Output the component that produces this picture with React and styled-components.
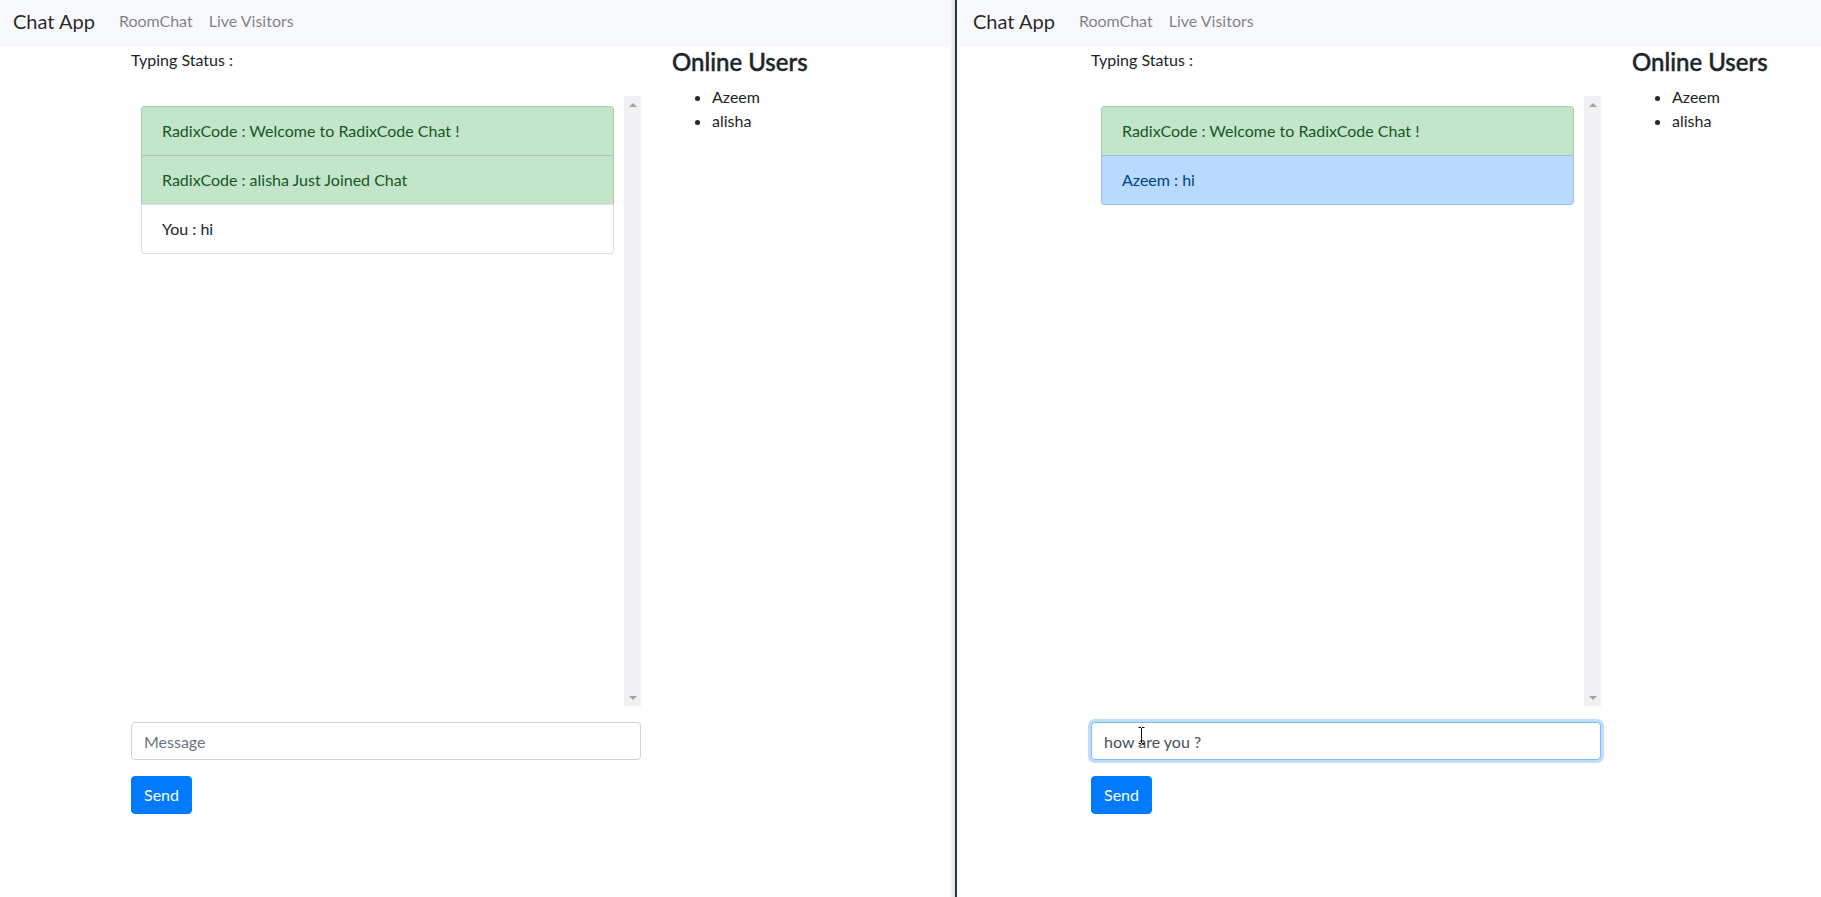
import React from "react";
import styled, { createGlobalStyle } from "styled-components";

const GlobalStyle = createGlobalStyle`
  html, body {
    margin: 0;
    padding: 0;
    height: 100%;
  }
  body {
    font-family: Lato, "Liberation Sans", sans-serif;
    color: #212529;
    background: #fff;
    overflow: hidden;
  }
  #root {
    height: 100%;
  }
  * {
    box-sizing: border-box;
  }
`;

const Desktop = styled.div`
  display: flex;
  width: 1821px;
  height: 897px;
  overflow: hidden;
`;

const Window = styled.div`
  flex: none;
  width: ${(p) => p.$width}px;
  height: 100%;
  overflow: hidden;
  padding-left: ${(p) => p.$inset || 0}px;
  background: #fff;
`;

/* 창 사이 경계선 + 그림자 */
const Divider = styled.div`
  flex: none;
  width: 7px;
  height: 100%;
  background: linear-gradient(
    to right,
    rgba(0, 0, 0, 0.02),
    rgba(0, 0, 0, 0.13) 5px,
    #1c3a4e 5px,
    #1c3a4e 7px
  );
`;

const Page = styled.div`
  width: 950px;
  height: 100%;
  display: flex;
  flex-direction: column;
`;

const Navbar = styled.nav`
  flex: none;
  height: 47px;
  display: flex;
  align-items: center;
  padding: 0 0 5px 13px;
  background: #f8f9fc;
`;

const Brand = styled.a`
  font-size: 20px;
  line-height: 30px;
  color: rgba(0, 0, 0, 0.85);
  margin-right: 16px;
  text-decoration: none;
`;

const NavLink = styled.a`
  font-size: 16px;
  line-height: 24px;
  padding: 0 8px;
  color: rgba(0, 0, 0, 0.5);
  text-decoration: none;
`;

const Main = styled.main`
  display: flex;
  gap: 31px;
  padding: 1px 0 0 131px;
`;

const ChatColumn = styled.section`
  width: 510px;
  display: flex;
  flex-direction: column;
`;

const TypingStatus = styled.div`
  font-size: 16px;
  line-height: 24px;
`;

const ChatBox = styled.div`
  display: flex;
  height: 610px;
  margin-top: 24px;
`;

const Messages = styled.div`
  flex: 1;
  padding: 10px;
`;

const ListGroup = styled.ul`
  margin: 0;
  padding: 0;
  list-style: none;
  display: flex;
  flex-direction: column;
`;

const itemColors = {
  success: { bg: "#c3e6cb", fg: "#155724" },
  primary: { bg: "#b8daff", fg: "#004085" },
  plain: { bg: "#fff", fg: "#212529" },
};

const ListItem = styled.li`
  padding: 12px 20px;
  font-size: 16px;
  line-height: 24px;
  border: 1px solid rgba(0, 0, 0, 0.125);
  margin-bottom: -1px;
  background: ${(p) => itemColors[p.$variant].bg};
  color: ${(p) => itemColors[p.$variant].fg};

  &:first-child {
    border-radius: 4px 4px 0 0;
  }
  &:last-child {
    margin-bottom: 0;
    border-radius: 0 0 4px 4px;
  }
`;

const ScrollTrack = styled.div`
  flex: none;
  width: 17px;
  display: flex;
  flex-direction: column;
  justify-content: space-between;
  background: #f0eff2;
`;

const ScrollArrow = styled.div`
  height: 17px;
  display: flex;
  align-items: center;
  justify-content: center;

  &::before {
    content: "";
    border-left: 4px solid transparent;
    border-right: 4px solid transparent;
    ${(p) =>
      p.$dir === "up"
        ? "border-bottom: 4px solid #a3a3a3;"
        : "border-top: 4px solid #a3a3a3;"}
  }
`;

const InputWrap = styled.div`
  position: relative;
  margin-top: 16px;
`;

const MessageInput = styled.input`
  display: block;
  width: 100%;
  height: 38px;
  padding: 6px 12px;
  font-family: inherit;
  font-size: 16px;
  line-height: 24px;
  color: #495057;
  background: #fff;
  border: 1px solid ${(p) => (p.$focused ? "#80bdff" : "#ced4da")};
  border-radius: 4px;
  outline: none;
  box-shadow: ${(p) =>
    p.$focused ? "0 0 0 3px rgba(0, 123, 255, 0.25)" : "none"};

  &::placeholder {
    color: #6c757d;
  }
`;

const TextCursor = styled.svg`
  position: absolute;
  left: 47px;
  top: 5px;
  pointer-events: none;
`;

const SendButton = styled.button`
  align-self: flex-start;
  margin-top: 16px;
  padding: 6px 12px;
  font-family: inherit;
  font-size: 16px;
  line-height: 24px;
  color: #fff;
  background: #007bff;
  border: 1px solid #007bff;
  border-radius: 4px;
`;

const UsersColumn = styled.aside`
  display: flex;
  flex-direction: column;
`;

const Heading = styled.h4`
  margin: 0 0 8px;
  font-size: 24px;
  font-weight: 500;
  line-height: 1.2;
  white-space: nowrap;
  -webkit-text-stroke: 0.45px #212529;
`;

const UserList = styled.ul`
  margin: 0;
  padding-left: 40px;
  font-size: 16px;
  line-height: 24px;
`;

const onlineUsers = ["Azeem", "alisha"];

const ChatPage = ({ messages, draft }) => (
  <Page>
    <Navbar>
      <Brand href="#none">Chat App</Brand>
      <NavLink href="#none">RoomChat</NavLink>
      <NavLink href="#none">Live Visitors</NavLink>
    </Navbar>

    <Main>
      <ChatColumn>
        <TypingStatus>Typing Status :</TypingStatus>

        {/* 메시지 목록 */}
        <ChatBox>
          <Messages>
            <ListGroup>
              {messages.map((m, idx) => (
                <ListItem key={idx} $variant={m.variant}>
                  {m.text}
                </ListItem>
              ))}
            </ListGroup>
          </Messages>
          <ScrollTrack>
            <ScrollArrow $dir="up" />
            <ScrollArrow $dir="down" />
          </ScrollTrack>
        </ChatBox>

        <InputWrap>
          <MessageInput
            type="text"
            placeholder="Message"
            defaultValue={draft || ""}
            $focused={!!draft}
            readOnly
          />
          {draft && (
            <TextCursor width="7" height="17" viewBox="0 0 7 17">
              <path
                d="M0.5 0.5h2.5M4 0.5h2.5M3.5 1v15M0.5 16.5h2.5M4 16.5h2.5"
                stroke="#111"
                strokeWidth="1"
                fill="none"
              />
            </TextCursor>
          )}
        </InputWrap>
        <SendButton>Send</SendButton>
      </ChatColumn>

      <UsersColumn>
        <Heading>Online Users</Heading>
        <UserList>
          {onlineUsers.map((u) => (
            <li key={u}>{u}</li>
          ))}
        </UserList>
      </UsersColumn>
    </Main>
  </Page>
);

const leftMessages = [
  { text: "RadixCode : Welcome to RadixCode Chat !", variant: "success" },
  { text: "RadixCode : alisha Just Joined Chat", variant: "success" },
  { text: "You : hi", variant: "plain" },
];

const rightMessages = [
  { text: "RadixCode : Welcome to RadixCode Chat !", variant: "success" },
  { text: "Azeem : hi", variant: "primary" },
];

const App = () => (
  <>
    <GlobalStyle />
    <Desktop>
      <Window $width={950}>
        <ChatPage messages={leftMessages} />
      </Window>
      <Divider />
      <Window $width={864} $inset={3}>
        <ChatPage messages={rightMessages} draft="how are you ?" />
      </Window>
    </Desktop>
  </>
);

export default App;
